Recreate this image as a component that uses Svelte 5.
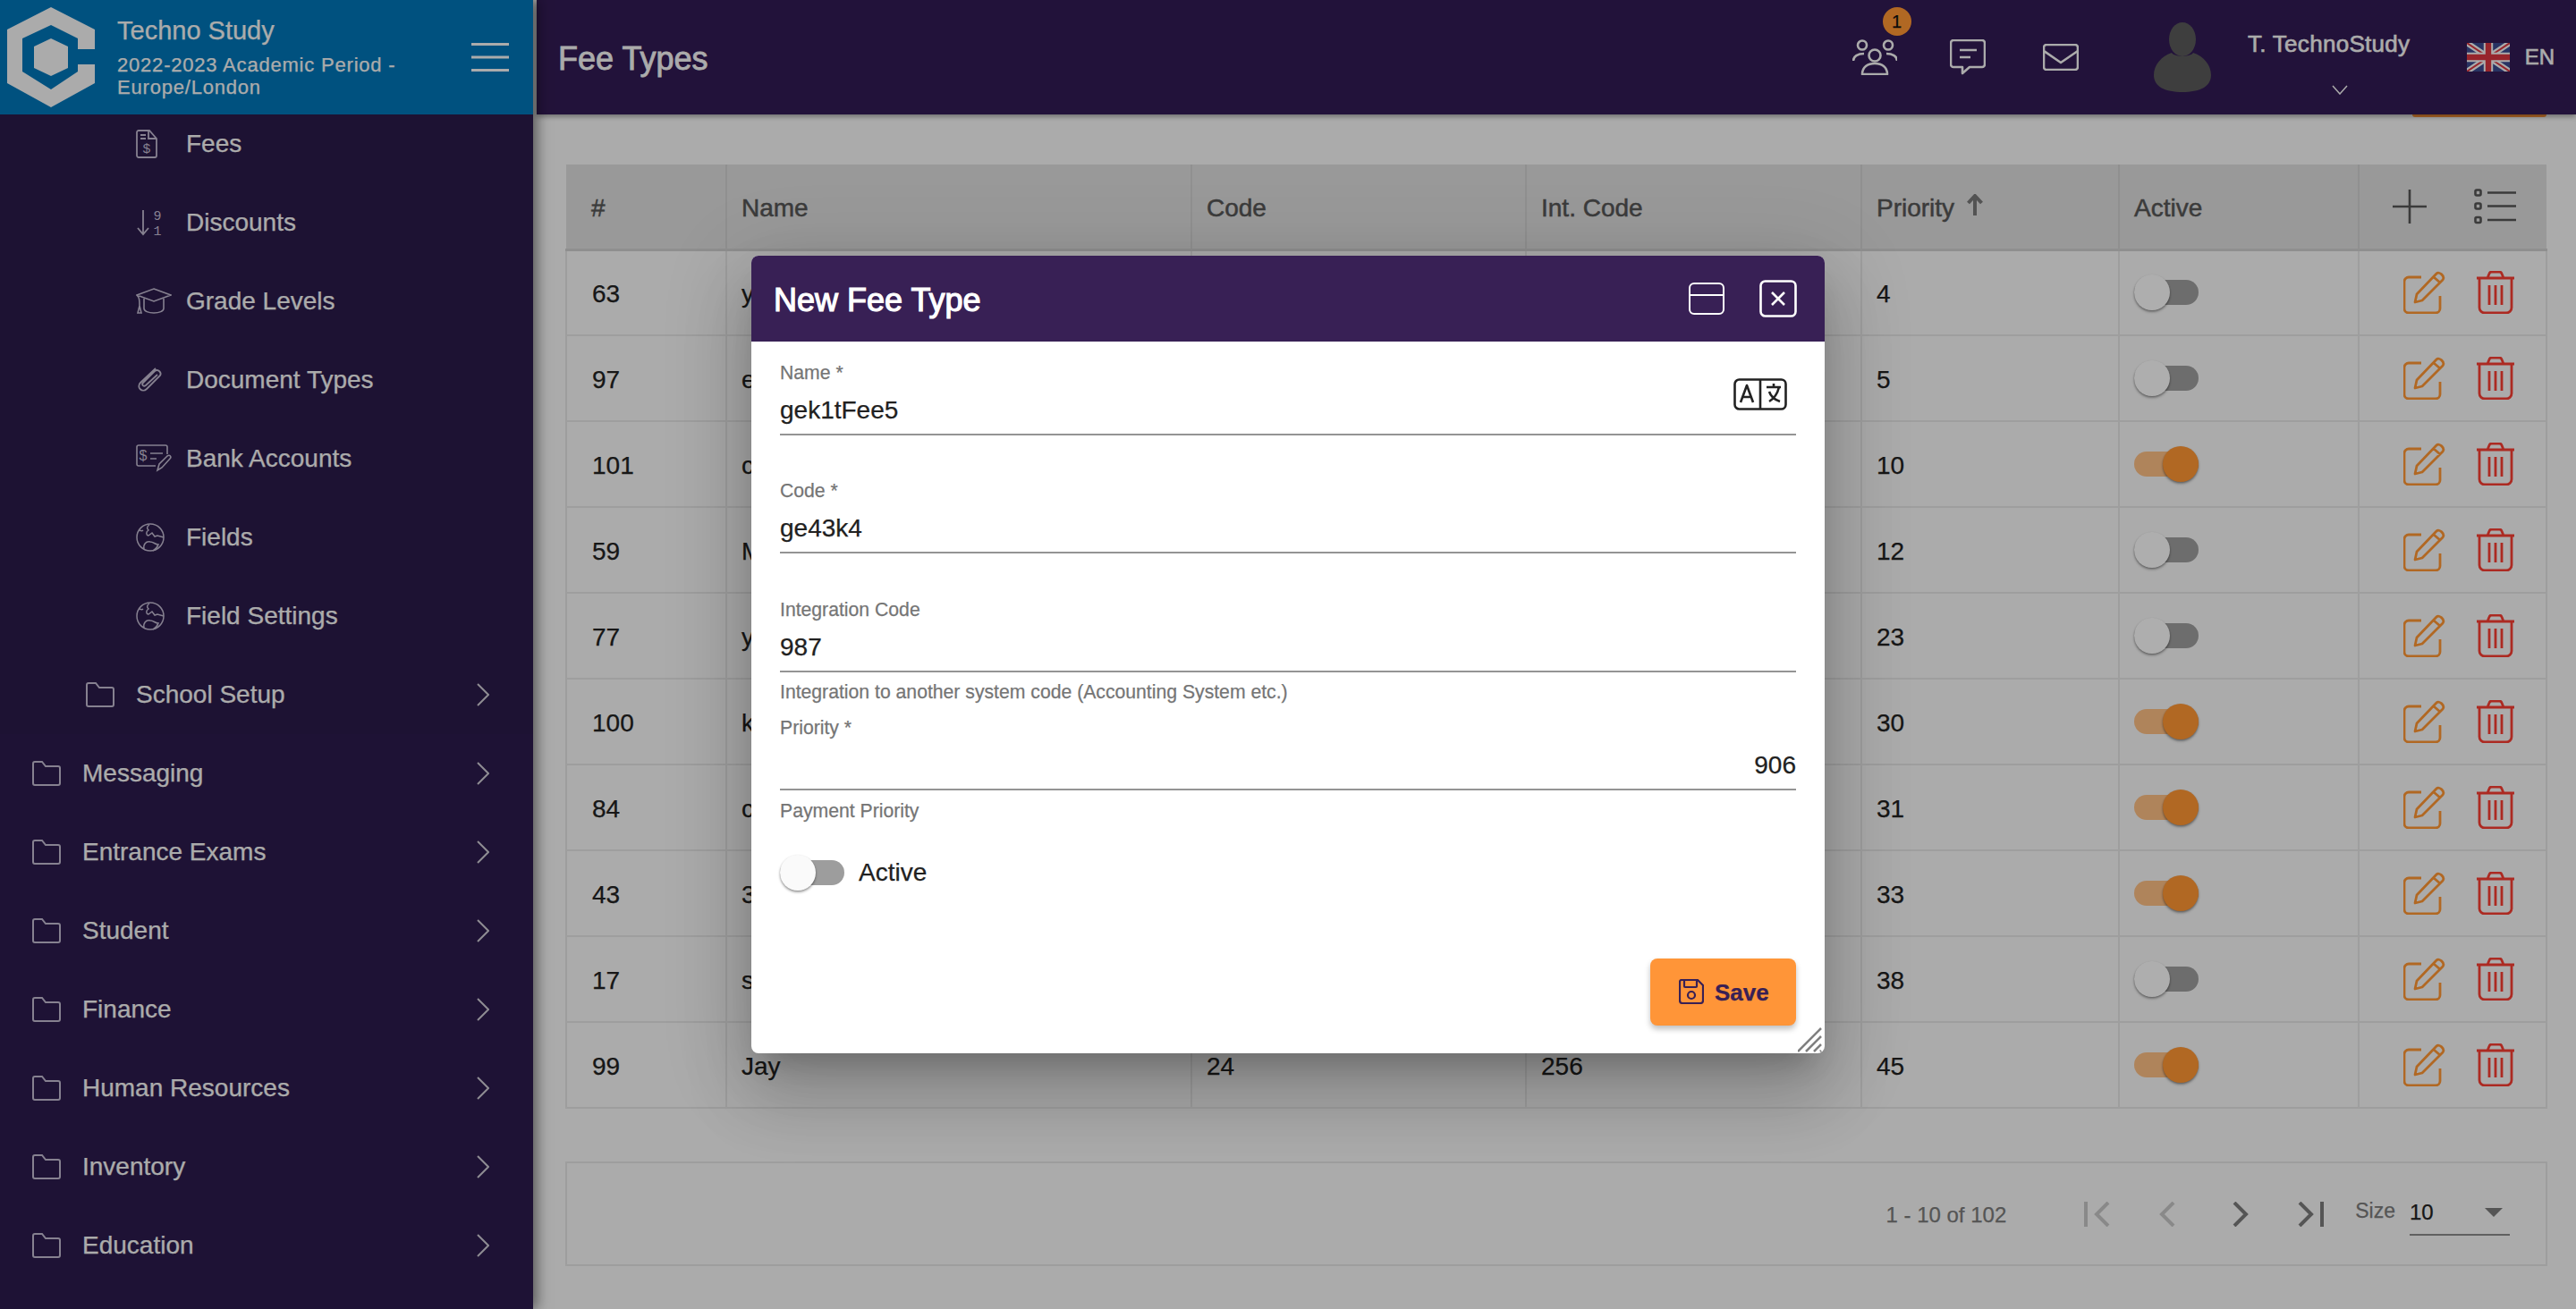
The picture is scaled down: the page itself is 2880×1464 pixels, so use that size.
<script>
  const subItems = [
    { label: 'Fees', icon: 'fee' },
    { label: 'Discounts', icon: 'sort' },
    { label: 'Grade Levels', icon: 'cap' },
    { label: 'Document Types', icon: 'clip' },
    { label: 'Bank Accounts', icon: 'cheque' },
    { label: 'Fields', icon: 'globe' },
    { label: 'Field Settings', icon: 'globe' }
  ];
  const topItems = ['Messaging', 'Entrance Exams', 'Student', 'Finance', 'Human Resources', 'Inventory', 'Education'];

  const rows = [
    { id: 63, name: 'y', code: '', intCode: '', priority: 4, active: false },
    { id: 97, name: 'e', code: '', intCode: '', priority: 5, active: false },
    { id: 101, name: 'c', code: '', intCode: '', priority: 10, active: true },
    { id: 59, name: 'M', code: '', intCode: '', priority: 12, active: false },
    { id: 77, name: 'y', code: '', intCode: '', priority: 23, active: false },
    { id: 100, name: 'k', code: '', intCode: '', priority: 30, active: true },
    { id: 84, name: 'c', code: '', intCode: '', priority: 31, active: true },
    { id: 43, name: '3', code: '', intCode: '', priority: 33, active: true },
    { id: 17, name: 's', code: '', intCode: '', priority: 38, active: false },
    { id: 99, name: 'Jay', code: '24', intCode: '256', priority: 45, active: true }
  ];
</script>

{#snippet toggle(on)}
  <span class="toggle" class:on><span class="thumb"></span></span>
{/snippet}

{#snippet folder()}
  <svg class="folder" width="32" height="28" viewBox="0 0 32 28" fill="none" stroke="currentColor" stroke-width="2">
    <path d="M1 3a2 2 0 0 1 2-2h8l4 5h14a2 2 0 0 1 2 2v17a2 2 0 0 1-2 2H3a2 2 0 0 1-2-2z" />
  </svg>
{/snippet}

{#snippet chevron()}
  <svg class="chev" width="14" height="26" viewBox="0 0 14 26" fill="none" stroke="currentColor" stroke-width="2">
    <path d="M1 1l12 12L1 25" />
  </svg>
{/snippet}

<div class="page">
  <aside class="sidebar">
    <div class="brand">
      <svg width="114" height="128" viewBox="0 0 114 128">
        <path fill="#f5f5f5" fill-rule="evenodd" d="M57 8l49 25v22H87V43L57 28 25 43v37l32 20 30-20v-8h19v21l-49 27L8 93V33zM57 43l19 9v24l-19 9-19-9V52z" />
      </svg>
      <div class="brand-text">
        <div class="brand-name">Techno Study</div>
        <div class="brand-period">2022-2023 Academic Period - Europe/London</div>
      </div>
      <svg class="burger" width="42" height="34" viewBox="0 0 42 34" stroke="#f5f5f5" stroke-width="3">
        <path d="M0 2.5h42M0 17h42M0 31.500h42" />
      </svg>
    </div>

    <nav class="nav">
      <div class="nested">
        {#each subItems as item}
          <div class="row deep">
            <span class="ico">
              {#if item.icon === 'fee'}
                <svg width="24" height="32" viewBox="0 0 24 32" fill="none" stroke="currentColor" stroke-width="1.800">
                  <path d="M3 1h12l8 9v19a2 2 0 0 1-2 2H3a2 2 0 0 1-2-2V3a2 2 0 0 1 2-2zM14 1v9h9M5 6h6M5 10h6" />
                  <text x="12" y="26" font-size="15" text-anchor="middle" fill="currentColor" stroke="none" font-family="Liberation Sans">$</text>
                </svg>
              {:else if item.icon === 'sort'}
                <svg width="32" height="30" viewBox="0 0 32 30" fill="none" stroke="currentColor" stroke-width="1.800">
                  <path d="M8 1v27M2 21l6 7 6-7" />
                  <text x="24" y="12" font-size="15" text-anchor="middle" fill="currentColor" stroke="none" font-family="Liberation Mono">9</text>
                  <text x="24" y="29" font-size="15" text-anchor="middle" fill="currentColor" stroke="none" font-family="Liberation Mono">1</text>
                </svg>
              {:else if item.icon === 'cap'}
                <svg width="40" height="30" viewBox="0 0 40 30" fill="none" stroke="currentColor" stroke-width="1.600">
                  <path d="M20 1L39 8 20 15 1 8zM9 12v11c0 3 5 5 11 5s11-2 11-5V12M1 8c3 3 3 6 3 12M2 28l2-8 2 8z" />
                </svg>
              {:else if item.icon === 'clip'}
                <svg width="30" height="30" viewBox="0 0 30 30" fill="none" stroke="currentColor" stroke-width="1.800">
                  <path d="M22 2L5 18c-5 5 2 12 7 7L27 10c2-3-2-8-6-5L8 18c-2 2 0 5 3 3L24 9" />
                </svg>
              {:else if item.icon === 'cheque'}
                <svg width="40" height="32" viewBox="0 0 40 32" fill="none" stroke="currentColor" stroke-width="1.600">
                  <path d="M22 24H3a2 2 0 0 1-2-2V3a2 2 0 0 1 2-2h30a2 2 0 0 1 2 2v8M16 10h14M16 16h7M24 29l2-7 9-9c3-2 5 1 3 3l-9 10z" />
                  <text x="8" y="18" font-size="16" text-anchor="middle" fill="currentColor" stroke="none" font-family="Liberation Sans">$</text>
                </svg>
              {:else}
                <svg width="32" height="32" viewBox="0 0 32 32" fill="none" stroke="currentColor" stroke-width="1.500">
                  <circle cx="16" cy="16" r="15" />
                  <path d="M15 2c-3 2-3 4-1 6-3 2-3 5 0 6l4-3 3 4 3-1 7 2M4 8c2 1 3 1 4 0M9 29c-1-5 2-9 7-8 4 0 5 3 9 3-1 3-3 5-6 7" />
                </svg>
              {/if}
            </span>
            <span>{item.label}</span>
          </div>
        {/each}
        <div class="row mid">
          <span class="ico">{@render folder()}</span>
          <span>School Setup</span>
          {@render chevron()}
        </div>
      </div>
      {#each topItems as label}
        <div class="row top">
          <span class="ico">{@render folder()}</span>
          <span>{label}</span>
          {@render chevron()}
        </div>
      {/each}
    </nav>
  </aside>

  <div class="main">
    <header class="topbar">
      <h1>Fee Types</h1>
      <div class="people">
        <span class="badge">1</span>
        <svg width="50" height="40" viewBox="0 0 50 40" fill="none" stroke="#f5f5f5" stroke-width="2.600">
          <circle cx="11" cy="6.500" r="5" /><circle cx="40" cy="6.500" r="5" /><circle cx="25" cy="18" r="6.500" />
          <path d="M1 24c0-5 5-8 12-8M50 24c0-5-5-8-12-8M11 39c0-8 6-12 14-12s14 4 14 12z" stroke-linejoin="round" />
        </svg>
      </div>
      <svg class="chat" width="40" height="40" viewBox="0 0 40 40" fill="none" stroke="#f5f5f5" stroke-width="2.600">
        <path d="M4 1h32a3 3 0 0 1 3 3v24a3 3 0 0 1-3 3H22L14 38v-7H4a3 3 0 0 1-3-3V4a3 3 0 0 1 3-3zM11 12h19M11 20h12" stroke-linejoin="round" />
      </svg>
      <svg class="mail" width="40" height="30" viewBox="0 0 40 30" fill="none" stroke="#f5f5f5" stroke-width="2.600">
        <rect x="1" y="1" width="38" height="28" rx="3" />
        <path d="M1 8l19 13L39 8" />
      </svg>
      <svg class="avatar" width="64" height="78" viewBox="0 0 64 78" fill="#595959">
        <ellipse cx="32" cy="19" rx="15" ry="19" />
        <path d="M20 34c3 5 21 5 24 0 12 4 20 14 20 25 0 13-13 19-32 19S0 72 0 59c0-11 8-21 20-25z" />
      </svg>
      <div class="user">
        <div class="user-name">T. TechnoStudy</div>
        <svg class="user-chev" width="18" height="11" viewBox="0 0 18 11" fill="none" stroke="#f5f5f5" stroke-width="1.500">
          <path d="M1 1l8 9 8-9" />
        </svg>
      </div>
      <svg class="flag" width="48" height="32" viewBox="0 0 60 40">
        <rect width="60" height="40" fill="#3a4a8f" />
        <path d="M0 0l60 40M60 0L0 40" stroke="#f5f5f5" stroke-width="8" />
        <path d="M0 0l60 40M60 0L0 40" stroke="#d8363f" stroke-width="2.500" />
        <path d="M30 0v40M0 20h60" stroke="#f5f5f5" stroke-width="13" />
        <path d="M30 0v40M0 20h60" stroke="#d8363f" stroke-width="8" />
      </svg>
      <span class="lang">EN</span>
    </header>

    <div class="content">
      <div class="peek"></div>
      <table>
        <colgroup>
          <col style="width:179px" /><col style="width:520px" /><col style="width:374px" /><col style="width:375px" /><col style="width:288px" /><col style="width:268px" /><col />
        </colgroup>
        <thead>
          <tr>
            <th class="first">#</th>
            <th>Name</th>
            <th>Code</th>
            <th>Int. Code</th>
            <th>
              <span class="sort">Priority
                <svg width="18" height="24" viewBox="0 0 18 24" fill="none" stroke="#777" stroke-width="4"><path d="M9 24V2M1.500 10L9 2l7.500 8" /></svg>
              </span>
            </th>
            <th>Active</th>
            <th class="tools">
              <div class="tool-icons">
                <svg width="40" height="40" viewBox="0 0 40 40" stroke="#555" stroke-width="2.600"><path d="M20 1v38M1 20h38" /></svg>
                <svg width="48" height="40" viewBox="0 0 48 40" fill="none" stroke="#555" stroke-width="2.600">
                  <rect x="1.500" y="1.500" width="6" height="6" rx="1.500" /><rect x="1.500" y="16.500" width="6" height="6" rx="1.500" /><rect x="1.500" y="32" width="6" height="6" rx="1.500" />
                  <path d="M15 4.500h32M15 19.500h32M15 35h32" />
                </svg>
              </div>
            </th>
          </tr>
        </thead>
        <tbody>
          {#each rows as row}
            <tr>
              <td class="first">{row.id}</td>
              <td>{row.name}</td>
              <td>{row.code}</td>
              <td>{row.intCode}</td>
              <td>{row.priority}</td>
              <td>{@render toggle(row.active)}</td>
              <td class="tools">
                <div class="row-icons">
                  <svg width="48" height="48" viewBox="0 0 48 48" fill="none" stroke="#fe9533" stroke-width="2.800" stroke-linejoin="round">
                    <path d="M20 7H6a5 5 0 0 0-5 5v30a5 5 0 0 0 5 5h30a5 5 0 0 0 5-5V28" />
                    <path d="M13 35l2-9L37 3c3-3 10 3 7 7L21 33zM34 7l7 6" />
                  </svg>
                  <svg width="42" height="48" viewBox="0 0 42 48" fill="none" stroke="#f73d31" stroke-width="2.800" stroke-linejoin="round">
                    <path d="M0 8h42M3 8v33a6 6 0 0 0 6 6h24a6 6 0 0 0 6-6V8M12 8l2-5a3 3 0 0 1 3-2h8a3 3 0 0 1 3 2l2 5M14 16v22M21 16v22M28 16v22" />
                  </svg>
                </div>
              </td>
            </tr>
          {/each}
        </tbody>
      </table>

      <div class="pager">
        <span class="range">1 - 10 of 102</span>
        <svg class="pg first-pg" width="30" height="28" viewBox="0 0 30 28" fill="none" stroke="#c4c4c4" stroke-width="4"><path d="M3 0v28M28 1L15 14l13 13" /></svg>
        <svg class="pg prev" width="18" height="28" viewBox="0 0 18 28" fill="none" stroke="#c4c4c4" stroke-width="4"><path d="M16 1L3 14l13 13" /></svg>
        <svg class="pg next" width="18" height="28" viewBox="0 0 18 28" fill="none" stroke="#7a7a7a" stroke-width="4"><path d="M2 1l13 13L2 27" /></svg>
        <svg class="pg last" width="30" height="28" viewBox="0 0 30 28" fill="none" stroke="#7a7a7a" stroke-width="4"><path d="M27 0v28M2 1l13 13L2 27" /></svg>
        <span class="size-label">Size</span>
        <div class="size">
          <span>10</span>
          <svg width="20" height="10" viewBox="0 0 20 10" fill="#7a7a7a"><path d="M0 0h20L10 10z" /></svg>
        </div>
      </div>
    </div>
  </div>

  <div class="backdrop">
    <section class="dialog">
      <div class="dialog-head">
        <h2>New Fee Type</h2>
        <svg class="max" width="40" height="36" viewBox="0 0 40 36" fill="none" stroke="#fff" stroke-width="2">
          <rect x="1" y="1" width="38" height="34" rx="5" /><path d="M1 14h38" />
        </svg>
        <svg class="close" width="42" height="42" viewBox="0 0 42 42" fill="none" stroke="#fff" stroke-width="2.600">
          <rect x="1.500" y="1.500" width="39" height="39" rx="5" /><path d="M14 14l14 14M28 14L14 28" />
        </svg>
      </div>
      <div class="dialog-body">
        <div class="field">
          <div class="control">
            <div class="label">Name *</div>
            <div class="value">gek1tFee5</div>
            <svg class="translate" width="60" height="36" viewBox="0 0 60 36" fill="none" stroke="#222" stroke-width="2.600" stroke-linejoin="round">
              <rect x="1.500" y="1.500" width="57" height="33" rx="5" /><path d="M30 1.500v33" />
              <path d="M8 27l7-19 7 19M10.500 21h9M37 10h16M45 6v4M51 10c-2 8-6 13-11 16M40 15c2 6 6 9 12 11" />
            </svg>
          </div>
        </div>
        <div class="field">
          <div class="control">
            <div class="label">Code *</div>
            <div class="value">ge43k4</div>
          </div>
        </div>
        <div class="field">
          <div class="control">
            <div class="label">Integration Code</div>
            <div class="value">987</div>
          </div>
          <div class="hint">Integration to another system code (Accounting System etc.)</div>
        </div>
        <div class="field">
          <div class="control">
            <div class="label">Priority *</div>
            <div class="value right">906</div>
          </div>
          <div class="hint tight">Payment Priority</div>
        </div>
        <div class="active-row">
          {@render toggle(false)}
          <span>Active</span>
        </div>
        <div class="actions">
          <button type="button" class="save">
            <svg width="28" height="28" viewBox="0 0 28 28" fill="none" stroke="#382055" stroke-width="2.200" stroke-linejoin="round">
              <path d="M3 1h18l6 6v17a3 3 0 0 1-3 3H4a3 3 0 0 1-3-3V3a2 2 0 0 1 2-2z" />
              <path d="M6 1v7a1 1 0 0 0 1 1h12a1 1 0 0 0 1-1V1" /><circle cx="14" cy="18" r="4" />
            </svg>
            <span class="save-text">Save</span>
          </button>
        </div>
      </div>
      <svg class="resize" width="28" height="28" viewBox="0 0 28 28" stroke="#7f7f7f" stroke-width="2.500">
        <path d="M0 27L26 1M9 27L26 10M18 27l8-8M25 27l1-1" />
      </svg>
    </section>
  </div>
</div>

<style>
  :global(body) {
    margin: 0;
    font-family: "Liberation Sans", Arial, sans-serif;
  }
  .page {
    position: relative;
    display: flex;
    width: 2880px;
    height: 1464px;
    overflow: hidden;
    background: #f5f5f5;
    color: #212121;
    font-size: 28px;
    -webkit-text-stroke: 0.25px currentColor;
  }

  .sidebar {
    position: relative;
    flex: 0 0 596px;
    background: #2c1b4c;
    box-shadow: 4px 0 14px rgba(0, 0, 0, 0.5);
    color: #f5f5f5;
    z-index: 2;
  }
  .brand {
    position: relative;
    z-index: 1;
    display: flex;
    align-items: center;
    height: 128px;
    background: #0075b7;
  }
  .brand > svg:first-child { flex: none; }
  .brand-text {
    width: 340px;
    margin-left: 17px;
    padding-top: 4px;
  }
  .brand-name {
    font-size: 29px;
    line-height: 36px;
    margin-bottom: 8px;
    margin-top: -6px;
  }
  .brand-period {
    font-size: 22px;
    line-height: 25px;
    letter-spacing: 0.8px;
  }
  .burger { margin-left: 56px; flex: none; }

  .nav { margin-top: -11px; }
  .nested { background: #2a1a49; }
  .row {
    display: flex;
    align-items: center;
    height: 88px;
    padding-right: 49px;
  }
  .row.deep { padding-left: 152px; }
  .row.mid { padding-left: 96px; }
  .row.top { padding-left: 36px; }
  .ico {
    display: flex;
    flex: none;
    width: 56px;
    color: #c0b9cf;
    -webkit-text-stroke: 0;
  }
  .chev {
    margin-left: auto;
    color: #f5f5f5;
    opacity: 0.8;
  }

  .main {
    flex: 1;
    min-width: 0;
    margin-left: 4px;
  }
  .topbar {
    position: relative;
    z-index: 1;
    display: flex;
    align-items: center;
    height: 128px;
    background: #321b53;
    box-shadow: 0 2px 6px rgba(0, 0, 0, 0.4);
    color: #f5f5f5;
  }
  .topbar h1 {
    margin: 0 0 0 24px;
    padding-top: 3px;
    font-size: 36px;
    font-weight: 400;
    -webkit-text-stroke: 0.8px #f5f5f5;
  }
  .people {
    position: relative;
    display: flex;
    margin-left: auto;
  }
  .badge {
    position: absolute;
    top: -36px;
    right: -16px;
    width: 32px;
    height: 32px;
    border-radius: 50%;
    background: #fe9533;
    color: #111;
    font-size: 20px;
    line-height: 32px;
    text-align: center;
  }
  .chat { margin-left: 59px; }
  .mail { margin-left: 64px; }
  .avatar { margin-left: 84px; }
  .user {
    display: flex;
    flex-direction: column;
    align-items: center;
    width: 184px;
    margin-left: 40px;
    margin-top: 2px;
  }
  .user-name {
    font-size: 26px;
    line-height: 48px;
    letter-spacing: 0.3px;
    white-space: nowrap;
    -webkit-text-stroke: 0.6px #f5f5f5;
  }
  .user-chev { margin-top: 22px; margin-left: 24px; }
  .flag { margin-left: 62px; }
  .lang {
    margin-left: 17px;
    margin-right: 24px;
    font-size: 24px;
    -webkit-text-stroke: 0.6px #f5f5f5;
  }

  .content { padding: 0 32px; }
  .peek {
    width: 150px;
    height: 3px;
    margin: 0 1px 53px auto;
    border-radius: 0 0 8px 8px;
    background: #ff9538;
  }
  table {
    width: 2216px;
    border-collapse: collapse;
    table-layout: fixed;
  }
  th {
    height: 95px;
    padding: 4px 16px 0;
    box-sizing: border-box;
    background: #dbdbdb;
    border-left: 2px solid #cfcfcf;
    border-bottom: 3px solid #cdcdcd;
    color: #555;
    font-size: 28px;
    font-weight: 400;
    text-align: left;
    -webkit-text-stroke: 0.5px #555;
  }
  td {
    height: 96px;
    padding: 4px 16px 0;
    box-sizing: border-box;
    border: 2px solid #e2e2e2;
  }
  th:first-child { border-left: 0; }
  .first { padding-left: 28px; }
  .sort {
    display: inline-flex;
    align-items: center;
    gap: 14px;
  }
  .sort svg { margin-top: -8px; }
  th.tools, td.tools { padding: 0; }
  .tool-icons {
    display: flex;
    align-items: center;
    gap: 52px;
    padding-left: 36px;
  }
  .row-icons {
    display: flex;
    align-items: center;
    gap: 34px;
    padding-left: 49px;
  }

  .toggle {
    position: relative;
    display: block;
    width: 72px;
    height: 28px;
    border-radius: 14px;
    background: #9d9d9d;
  }
  td .toggle { margin-top: -4px; }
  .toggle.on { background: #fbbd83; }
  .thumb {
    position: absolute;
    top: -6px;
    left: 0;
    width: 40px;
    height: 40px;
    border-radius: 50%;
    background: #fafafa;
    box-shadow: 0 2px 3px rgba(0, 0, 0, 0.3), 0 1px 2px rgba(0, 0, 0, 0.2);
  }
  .toggle.on .thumb {
    left: 32px;
    background: #fe9533;
  }

  .pager {
    display: flex;
    align-items: center;
    height: 117px;
    margin-top: 59px;
    box-sizing: border-box;
    border: 2px solid #e2e2e2;
    padding-right: 40px;
    justify-content: flex-end;
  }
  .range {
    margin-right: 86px;
    padding-top: 2px;
    color: #7a7a7a;
    font-size: 24px;
  }
  .pg { flex: none; }
  .prev { margin-left: 55px; }
  .next { margin-left: 64px; }
  .last { margin-left: 55px; }
  .size-label {
    margin-left: 34px;
    margin-top: -6px;
    color: #7a7a7a;
    font-size: 23px;
  }
  .size {
    display: flex;
    align-items: center;
    justify-content: space-between;
    width: 112px;
    height: 50px;
    margin-left: 16px;
    margin-top: -1px;
    padding: 0 8px 0 0;
    box-sizing: border-box;
    border-bottom: 2px solid #8a8a8a;
    font-size: 24px;
  }

  .backdrop {
    position: absolute;
    inset: 0;
    z-index: 10;
    background: rgba(0, 0, 0, 0.3);
  }
  .dialog {
    position: absolute;
    left: 840px;
    top: 286px;
    width: 1200px;
    height: 892px;
    border-radius: 8px;
    background: #fff;
    box-shadow: 0 22px 30px -14px rgba(0, 0, 0, 0.2), 0 48px 76px 6px rgba(0, 0, 0, 0.14), 0 18px 92px 16px rgba(0, 0, 0, 0.12);
  }
  .dialog-head {
    display: flex;
    align-items: center;
    height: 96px;
    padding: 0 31px 0 25px;
    box-sizing: border-box;
    border-radius: 8px 8px 0 0;
    background: #382055;
    color: #fff;
  }
  .dialog-head h2 {
    flex: 1;
    margin: 0;
    padding-top: 3px;
    font-size: 36px;
    font-weight: 400;
    -webkit-text-stroke: 1.2px #fff;
  }
  .close { margin-left: 39px; }
  .dialog-body { padding: 22px 32px 0; }
  .field { height: 132.4px; }
  .control {
    position: relative;
    height: 83px;
    box-sizing: border-box;
    border-bottom: 2px solid #949494;
  }
  .label {
    color: #757575;
    font-size: 21.2px;
    line-height: 26px;
  }
  .value {
    margin-top: 13px;
    color: #212121;
    font-size: 28px;
    line-height: 32px;
  }
  .value.right { text-align: right; }
  .translate {
    position: absolute;
    top: 19px;
    right: 10px;
  }
  .hint {
    margin-top: 9px;
    color: #757575;
    font-size: 21.2px;
    line-height: 26px;
  }
  .hint.tight { margin-top: 10px; }
  .active-row {
    display: flex;
    align-items: center;
    gap: 16px;
    height: 42px;
    margin-top: 21px;
  }
  .actions {
    display: flex;
    justify-content: flex-end;
    margin-top: 75px;
  }
  .save {
    display: flex;
    align-items: center;
    gap: 12px;
    height: 75px;
    width: 163px;
    padding: 0 0 0 32px;
    box-sizing: border-box;
    border: 0;
    border-radius: 8px;
    background: #ff9538;
    color: #382055;
    font: 700 26px "Liberation Sans", Arial, sans-serif;
    box-shadow: 0 4px 6px rgba(0, 0, 0, 0.25);
  }
  .save-text { padding-top: 3px; }
  .resize {
    position: absolute;
    right: 2px;
    bottom: 1px;
  }
</style>
